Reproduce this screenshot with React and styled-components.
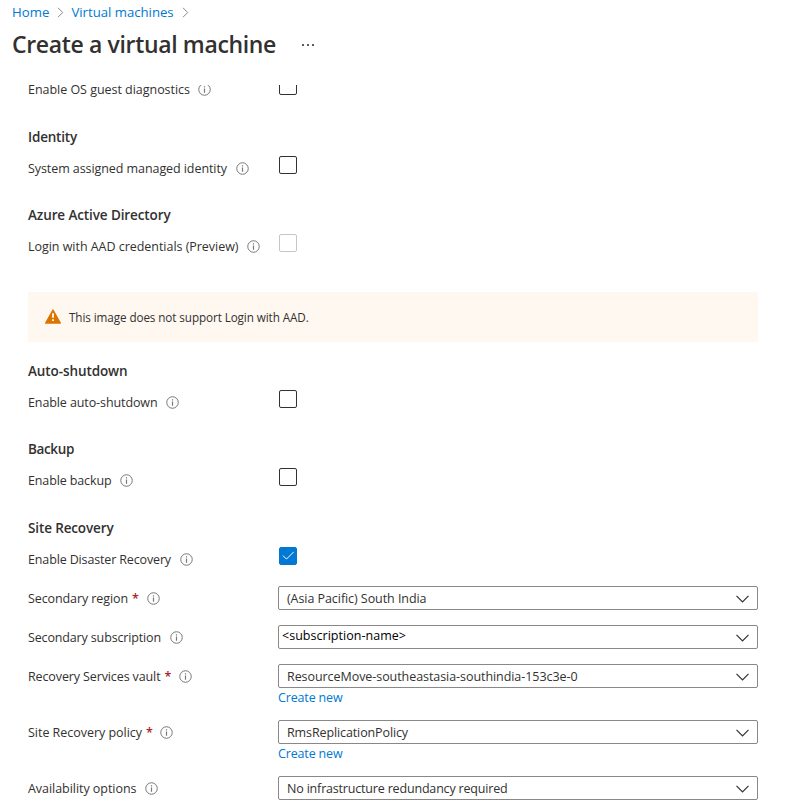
import React from 'react';
import styled, { createGlobalStyle } from 'styled-components';

const GlobalStyle = createGlobalStyle`
  * { box-sizing: border-box; }
  body {
    margin: 0;
    background: #fff;
    color: #323130;
    font-family: "Open Sans", "Noto Sans", sans-serif;
    font-size: 12.5px;
  }
`;

const Page = styled.div`
  width: 799px;
  height: 810px;
  overflow: hidden;
  display: flex;
  flex-direction: column;
`;

const Header = styled.header`
  height: 85px;
  flex: none;
  padding-left: 12px;
`;

const Breadcrumb = styled.nav`
  display: flex;
  align-items: center;
  height: 24px;
  font-size: 13.2px;
`;

const Crumb = styled.a`
  color: #0078d4;
  line-height: 18px;
  white-space: nowrap;
  letter-spacing: ${(p) => p.$tracking}px;
`;

const CrumbArrow = styled.svg`
  width: 7px;
  height: 11px;
  margin: 1px 7px 0 8px;
  fill: none;
  stroke: #8a8886;
`;

const TitleBar = styled.div`
  display: flex;
  align-items: center;
  height: 40px;
`;

const Title = styled.h1`
  margin: 0;
  width: 264px;
  font-size: 23px;
  line-height: 40px;
  font-weight: 600;
  letter-spacing: -0.35px;
  white-space: nowrap;
`;

const MoreDots = styled.svg`
  width: 12px;
  height: 2px;
  margin: 2px 0 0 26px;
  fill: #605e5c;
`;

const Form = styled.main`
  flex: 1;
  min-height: 0;
  overflow: hidden;
  padding-left: 28px;
`;

const SectionTitle = styled.h2`
  margin: ${(p) => p.$gap ?? 23}px 0 7px;
  height: 24px;
  line-height: 24px;
  font-size: 13.5px;
  font-weight: 600;
  letter-spacing: ${(p) => p.$tracking}px;
`;

const Row = styled.div`
  display: grid;
  grid-template-columns: 250px 480px;
  align-items: start;
  margin-top: ${(p) => p.$gap ?? 0}px;
`;

const LabelCell = styled.div`
  display: flex;
  align-items: center;
  height: 24px;
  white-space: nowrap;
`;

const LabelText = styled.label`
  letter-spacing: ${(p) => p.$tracking}px;
`;

const Required = styled.span`
  width: 6px;
  margin-left: 4px;
  color: #a4262c;
  font-weight: 600;
`;

const InfoSvg = styled.svg`
  width: 13px;
  height: 13px;
  margin: 1px 0 0 8.5px;
`;

const CheckBox = styled.span`
  display: flex;
  width: 18px;
  height: 18px;
  margin-left: 1px;
  border: 1px solid ${(p) => (p.$checked ? '#0078d4' : p.$disabled ? '#c8c6c4' : '#323130')};
  border-radius: 2px;
  background: ${(p) => (p.$checked ? '#0078d4' : '#fff')};
`;

const CheckMark = styled.svg`
  width: 16px;
  height: 16px;
  fill: none;
  stroke: #fff;
`;

const Select = styled.div`
  display: flex;
  align-items: center;
  justify-content: space-between;
  height: 24px;
  padding: 0 8px;
  border: 1px solid #8a8886;
  border-radius: 2px;
  white-space: nowrap;
`;

const SelectValue = styled.span`
  letter-spacing: ${(p) => p.$tracking}px;
`;

const Placeholder = styled(SelectValue)`
  margin: -3px 0 0 -5px;
  color: #000;
`;

const Chevron = styled.svg`
  width: 13px;
  height: 8px;
  margin-top: 1px;
  fill: none;
  stroke: #323130;
`;

const CreateLink = styled.a`
  display: block;
  height: 18px;
  padding-top: 1px;
  line-height: 18px;
  color: #0078d4;
  letter-spacing: -0.155px;
`;

const Notice = styled.div`
  display: flex;
  align-items: center;
  width: 730px;
  height: 50px;
  margin-top: 34px;
  padding-left: 17px;
  background: #fff8f1;
  font-size: 11.7px;
  letter-spacing: -0.09px;
`;

const WarningSvg = styled.svg`
  width: 16px;
  height: 15px;
  margin: -2px 8px 0 0;
`;

const Separator = () => (
  <CrumbArrow viewBox="0 0 7 11">
    <path d="M1 .8 5.7 5.5 1 10.2" />
  </CrumbArrow>
);

const InfoIcon = () => (
  <InfoSvg viewBox="0 0 13 13">
    <circle cx="6.5" cy="6.5" r="5.75" fill="none" stroke="#797775" />
    <path d="M6.5 5.5v4.2M6.5 3.2v1.2" stroke="#797775" strokeWidth="1.2" />
  </InfoSvg>
);

const Label = ({ text, tracking, required }) => (
  <LabelCell>
    <LabelText $tracking={tracking}>{text}</LabelText>
    {required && <Required>*</Required>}
    <InfoIcon />
  </LabelCell>
);

const CheckRow = ({ label, tracking, checked, disabled, gap }) => (
  <Row $gap={gap}>
    <Label text={label} tracking={tracking} />
    <CheckBox $checked={checked} $disabled={disabled}>
      {checked && (
        <CheckMark viewBox="0 0 16 16">
          <path d="M3 7.6 6.5 11.1 13.7 3.9" />
        </CheckMark>
      )}
    </CheckBox>
  </Row>
);

const SelectRow = ({ label, tracking, required, value, valueTracking, placeholder, link, gap = 15 }) => {
  const Value = placeholder ? Placeholder : SelectValue;
  return (
    <Row $gap={gap}>
      <Label text={label} tracking={tracking} required={required} />
      <div>
        <Select>
          <Value $tracking={valueTracking}>{value}</Value>
          <Chevron viewBox="0 0 13 8">
            <path d="M.5.9 6.5 6.9 12.5.9" strokeWidth="1.2" />
          </Chevron>
        </Select>
        {link && <CreateLink>{link}</CreateLink>}
      </div>
    </Row>
  );
};

export default function App() {
  return (
    <Page>
      <GlobalStyle />
      <Header>
        <Breadcrumb>
          <Crumb $tracking={0.045}>Home</Crumb>
          <Separator />
          <Crumb $tracking={-0.02}>Virtual machines</Crumb>
          <Separator />
        </Breadcrumb>
        <TitleBar>
          <Title>Create a virtual machine</Title>
          <MoreDots viewBox="0 0 12 2">
            <rect x="0" width="2" height="2" />
            <rect x="5" width="2" height="2" />
            <rect x="10" width="2" height="2" />
          </MoreDots>
        </TitleBar>
      </Header>
      <Form>
        <CheckRow gap={-8} label="Enable OS guest diagnostics" tracking={-0.031} />
        <SectionTitle $gap={24} $tracking={-0.193}>Identity</SectionTitle>
        <CheckRow label="System assigned managed identity" tracking={-0.075} />
        <SectionTitle $tracking={-0.109}>Azure Active Directory</SectionTitle>
        <CheckRow label="Login with AAD credentials (Preview)" tracking={-0.035} disabled />
        <Notice>
          <WarningSvg viewBox="0 0 16 15">
            <path d="M8 1 15.3 14H.7Z" fill="#db7500" stroke="#db7500" strokeWidth="1.4" strokeLinejoin="round" />
            <path d="M8 4.2v4.6M8 10.2v1.7" stroke="#fff" strokeWidth="1.8" />
          </WarningSvg>
          <span>This image does not support Login with AAD.</span>
        </Notice>
        <SectionTitle $gap={17} $tracking={-0.094}>Auto-shutdown</SectionTitle>
        <CheckRow label="Enable auto-shutdown" tracking={-0.1} />
        <SectionTitle $tracking={-0.359}>Backup</SectionTitle>
        <CheckRow label="Enable backup" tracking={-0.123} />
        <SectionTitle $gap={24} $tracking={-0.131}>Site Recovery</SectionTitle>
        <CheckRow label="Enable Disaster Recovery" tracking={-0.143} checked />
        <SelectRow label="Secondary region" tracking={-0.095} required value="(Asia Pacific) South India" valueTracking={-0.062} />
        <SelectRow label="Secondary subscription" tracking={-0.145} value="<subscription-name>" valueTracking={0.03} placeholder />
        <SelectRow label="Recovery Services vault" tracking={-0.117} required value="ResourceMove-southeastasia-southindia-153c3e-0" valueTracking={-0.062} link="Create new" />
        <SelectRow gap={14} label="Site Recovery policy" tracking={-0.03} required value="RmsReplicationPolicy" valueTracking={-0.113} link="Create new" />
        <SelectRow gap={14} label="Availability options" tracking={-0.043} value="No infrastructure redundancy required" valueTracking={-0.18} />
      </Form>
    </Page>
  );
}
